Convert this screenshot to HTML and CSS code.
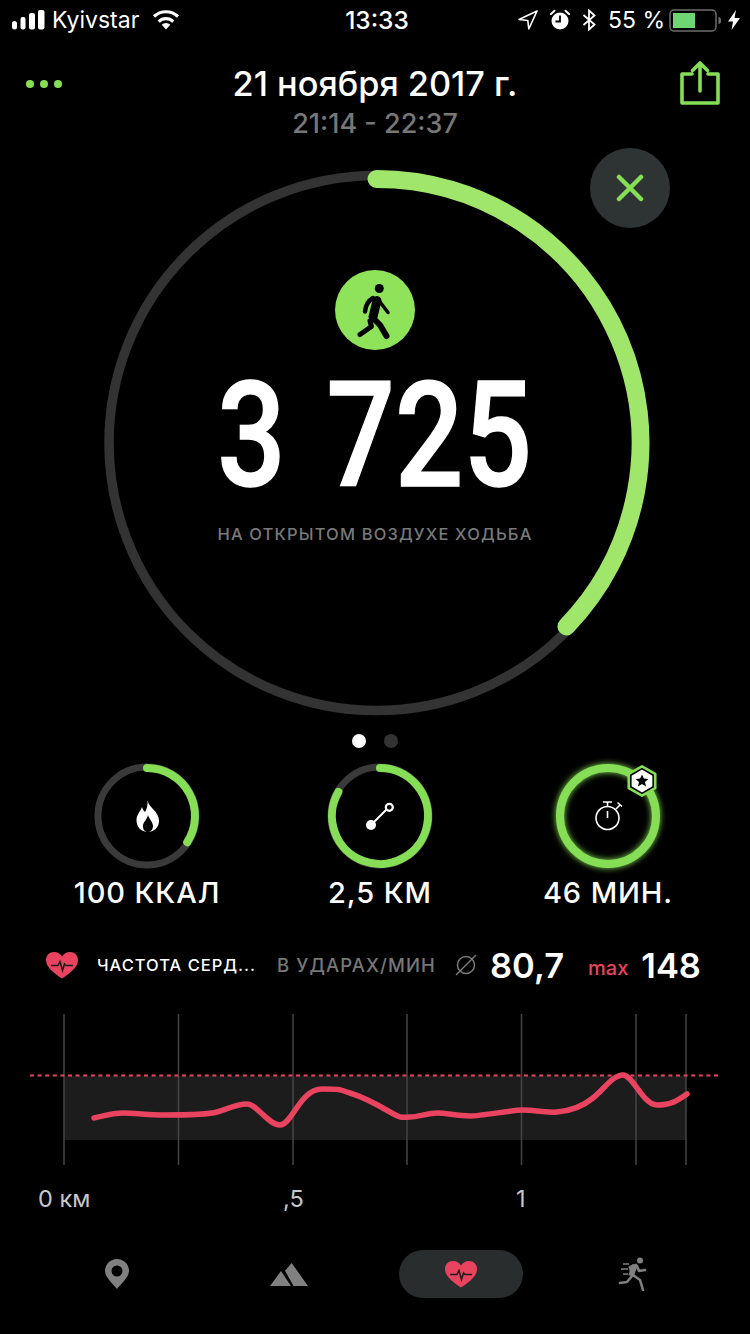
FILE: index.html
```html
<!DOCTYPE html>
<html lang="ru">
<head>
<meta charset="utf-8">
<title>Workout</title>
<link rel="stylesheet" href="styles.css">
</head>
<body>
<div class="phone">
  <div class="status">
    <div class="status-left">
      <svg class="ic-signal" viewBox="12 8 34 24"><rect x="12" y="21" width="5" height="8.5" rx="2.5"/><rect x="20.500" y="17" width="5" height="12.500" rx="2"/><rect x="29" y="13" width="6" height="16.500" rx="2"/><rect x="38" y="10" width="6.500" height="19.500" rx="2"/></svg>
      <span class="carrier">Kyivstar</span>
      <svg class="ic-wifi" viewBox="0 0 28 20"><path d="M14 19.500 9.700 14.800a6.300 6.300 0 0 1 8.600 0Z" fill="#fff"/><path d="M6.700 11.600a10.600 10.600 0 0 1 14.600 0M2 6.500a17.500 17.500 0 0 1 24 0" fill="none" stroke="#fff" stroke-width="3.200"/></svg>
    </div>
    <div class="clock">13:33</div>
    <div class="status-right">
      <svg class="ic-loc" viewBox="0 0 20 20"><path d="M19 1 1 9.500l8.800 1 1 8.500Z" fill="none" stroke="#fff" stroke-width="1.600" stroke-linejoin="round"/></svg>
      <svg class="ic-alarm" viewBox="0 0 20 22"><circle cx="10" cy="12" r="8.500" fill="#fff"/><path d="M10 6.500V12.500H5.500" fill="none" stroke="#000" stroke-width="1.800"/><path d="M1 5 4.500 1.700M19 5 15.500 1.700" stroke="#fff" stroke-width="2" stroke-linecap="round"/></svg>
      <svg class="ic-bt" viewBox="0 0 14 22"><path d="M1.500 6 12.500 15.500 7 20.500V1.500L12.500 6.500 1.500 16" fill="none" stroke="#fff" stroke-width="1.800"/></svg>
      <span class="pct">55 %</span>
      <svg class="ic-batt" viewBox="0 0 54 23"><rect x="1" y="1" width="46" height="21" rx="4" fill="none" stroke="#6e6e6e" stroke-width="1.500"/><rect x="4" y="4" width="22" height="15" fill="#6fd572"/><path d="M49.500 8c2 0 2.500 1.500 2.500 3.500s-.5 3.500-2.500 3.500Z" fill="#6e6e6e"/></svg>
      <svg class="ic-bolt" viewBox="0 0 12 20"><path d="M8 0 0 11.500h5L3.500 20 12 8H6.500Z" fill="#fff"/></svg>
    </div>
  </div>

  <header class="head">
    <div class="dots"><i></i><i></i><i></i></div>
    <div class="titles">
      <div class="date">21 ноября 2017 г.</div>
      <div class="range">21:14 - 22:37</div>
    </div>
    <svg class="ic-share" viewBox="0 0 40 44"><path d="M12 13H2v29h36V13H28M20 30V3M12.500 9.500 20 2l7.500 7.500" fill="none" stroke="#85de55" stroke-width="3.600" stroke-linejoin="round" stroke-linecap="round"/></svg>
  </header>

  <section class="hero">
    <svg class="hero-ring" viewBox="0 160 750 566">
      <circle cx="376.500" cy="443" r="267.500" fill="none" stroke="#333333" stroke-width="9.500"/>
      <path d="M376.500 179A264 264 0 0 1 566.400 626.400" fill="none" stroke="#a0e66a" stroke-width="18" stroke-linecap="round"/>
    </svg>
    <div class="hero-body">
      <svg class="ic-walk" viewBox="335 270 80 80">
        <circle cx="375" cy="310" r="40" fill="#8fe35a"/>
        <circle cx="379.300" cy="288.500" r="4.500" fill="#000"/>
        <path d="M377 300.500 373 317" stroke="#000" stroke-width="9" stroke-linecap="round"/>
        <path d="M373 298Q366 302 365 311.500" fill="none" stroke="#000" stroke-width="4.500" stroke-linecap="round"/>
        <path d="M380 302 388 312.500" stroke="#000" stroke-width="3.500" stroke-linecap="round"/>
        <path d="M372 317 380 325 386.500 336" fill="none" stroke="#000" stroke-width="6" stroke-linecap="round" stroke-linejoin="round"/>
        <path d="M370 321 371.500 326.500 360 334.500" fill="none" stroke="#000" stroke-width="5" stroke-linecap="round" stroke-linejoin="round"/>
      </svg>
      <div class="big">3 725</div>
      <div class="kind">НА ОТКРЫТОМ ВОЗДУХЕ ХОДЬБА</div>
    </div>
    <button class="close" aria-label="Закрыть"><svg viewBox="0 0 28 28"><path d="M3 3 25 25M25 3 3 25" stroke="#85de55" stroke-width="4.500" stroke-linecap="round"/></svg></button>
  </section>

  <div class="pager"><i class="on"></i><i></i></div>

  <section class="metrics">
    <div class="metric">
      <svg class="mring" viewBox="0 0 106 106">
        <circle cx="53" cy="53" r="49" fill="none" stroke="#3a3a3a" stroke-width="7"/>
        <path d="M53 5A48 48 0 0 1 93.200 79.200" fill="none" stroke="#85de55" stroke-width="8" stroke-linecap="round"/>
        <path d="M53.500 37C54.500 45 65 48 65 58 65 65 59 69 54 69 47 69 42.500 64 42.500 57 42.500 52 46 49 48 44 49 47 50 48 51 49 53 46 54 41 53.500 37Z" fill="#fff"/>
        <path d="M54 52C55 56 59 59 59 63 59 67 56 69 54 69 51 69 49 67 49 63 49 59 53 57 54 52Z" fill="#000"/>
      </svg>
      <div class="mlabel">100 ККАЛ</div>
    </div>
    <div class="metric">
      <svg class="mring" viewBox="0 0 106 106">
        <circle cx="53" cy="53" r="49" fill="none" stroke="#3a3a3a" stroke-width="7"/>
        <path d="M53 5A48 48 0 1 1 11.400 29" fill="none" stroke="#85de55" stroke-width="8" stroke-linecap="round"/>
        <circle cx="44" cy="62" r="5" fill="#fff"/>
        <circle cx="62.300" cy="44.300" r="3.500" fill="none" stroke="#fff" stroke-width="2.200"/>
        <path d="M44 62 60 46" stroke="#fff" stroke-width="2"/>
      </svg>
      <div class="mlabel">2,5 КМ</div>
    </div>
    <div class="metric">
      <svg class="mring mring-best" viewBox="0 0 106 106">
        <circle class="glow" cx="53" cy="53" r="48" fill="none" stroke="#85de55" stroke-width="8"/>
        <circle cx="52.500" cy="55" r="11.500" fill="none" stroke="#fff" stroke-width="1.600"/>
        <path d="M52.500 55V48M52.500 43.500V39.500M48 39H57M61 46 65 42M62.500 39.500 67 43.500" fill="none" stroke="#fff" stroke-width="1.600"/>
      </svg>
      <svg class="badge" viewBox="0 0 34 36"><path d="M17 1.500 32 10V26L17 34.500 2 26V10Z" fill="#000" stroke="#85de55" stroke-width="3" stroke-linejoin="round"/><path d="M17 6 28 12.300V23.700L17 30 6 23.700V12.300Z" fill="#fff" stroke="#fff" stroke-width="1.500" stroke-linejoin="round"/><path d="M17 10.500 19.100 15.200 24.200 15.700 20.400 19.100 21.500 24.200 17 21.500 12.500 24.200 13.600 19.100 9.800 15.700 14.900 15.200Z" fill="#000"/></svg>
      <div class="mlabel">46 МИН.</div>
    </div>
  </section>

  <section class="hr-row">
    <svg class="ic-heart" viewBox="0 0 32 27"><path d="M16 26.500C10 22.500 0 16 0 8 0 3.500 3.500 0 8 0 11.500 0 14.500 2 16 4.500 17.500 2 20.500 0 24 0 28.500 0 32 3.500 32 8 32 16 22 22.500 16 26.500Z" fill="#e9435f"/><path d="M5 13.500H12L14 9.500 16.500 18.500 18.500 12 20 13.500H27" fill="none" stroke="#1c1c1c" stroke-width="1.500"/></svg>
    <span class="hr-title">ЧАСТОТА СЕРД...</span>
    <span class="hr-unit">В УДАРАХ/МИН</span>
    <svg class="ic-avg" viewBox="0 0 22 22"><circle cx="11" cy="11" r="8.500" fill="none" stroke="#7a7a7a" stroke-width="1.500"/><path d="M1 21 21 1" stroke="#7a7a7a" stroke-width="1.500"/></svg>
    <span class="hr-val hr-avg">80,7</span>
    <span class="hr-max">max</span>
    <span class="hr-val">148</span>
  </section>

  <svg class="chart" viewBox="0 1010 750 160">
    <rect x="64" y="1076" width="622" height="64" fill="#1c1c1c"/>
    <path d="M64 1014V1165M178.500 1014V1165M293 1014V1165M407 1014V1165M521.500 1014V1165M636 1014V1165M686 1014V1165" stroke="#444" stroke-width="1.500"/>
    <path d="M30 1075.500H720" stroke="#e9435f" stroke-width="2" stroke-dasharray="4 3.600"/>
    <path d="M94 1118C104 1116 112 1113 123 1113S150 1115 163 1115 207 1115 217 1112 237 1104 247 1104 268 1125 280 1125 300 1089 322 1089 340 1090 350 1093 378 1105 390 1112 402 1117 410 1117 428 1113 437 1113 458 1116 470 1116 512 1110 523 1110 545 1113 557 1112 582 1107 593 1098 613 1075 623 1075 643 1105 657 1105 677 1101 687 1094" fill="none" stroke="#e9435f" stroke-width="5.500" stroke-linecap="round"/>
  </svg>

  <div class="axis">
    <span class="tick tick-0">0 км</span>
    <span class="tick tick-1">,5</span>
    <span class="tick tick-2">1</span>
  </div>

  <nav class="tabs">
    <div class="tab"><svg class="ic-pin" viewBox="0 0 24 30"><path fill-rule="evenodd" d="M12 30C8 25 0 18 0 12a12 12 0 0 1 24 0C24 18 16 25 12 30ZM12 6.500a5.500 5.500 0 1 0 0 11 5.500 5.500 0 0 0 0-11Z" fill="#808080"/></svg></div>
    <div class="tab"><svg class="ic-mount" viewBox="0 0 38 23"><path d="M0 23 11 8 21 23ZM15 7.700 21.700 0 38 23H23.500Z" fill="#808080"/></svg></div>
    <div class="tab tab-on"><svg class="ic-heart ic-heart-tab" viewBox="0 0 32 27"><path d="M16 26.500C10 22.500 0 16 0 8 0 3.500 3.500 0 8 0 11.500 0 14.500 2 16 4.500 17.500 2 20.500 0 24 0 28.500 0 32 3.500 32 8 32 16 22 22.500 16 26.500Z" fill="#e9435f"/><path d="M5 13.500H12L14 9.500 16.500 18.500 18.500 12 20 13.500H27" fill="none" stroke="#1c1c1c" stroke-width="1.500"/></svg></div>
    <div class="tab"><svg class="ic-run" viewBox="0 0 30 34"><circle cx="22" cy="3.500" r="3" fill="#808080"/><path d="M18 8 12 10 14 19 9 25 2 26M15 18 22 23 25 33M19 9 21 14 27 13" fill="none" stroke="#808080" stroke-width="2.600" stroke-linecap="round" stroke-linejoin="round"/><path d="M17 8 13 19" stroke="#808080" stroke-width="5.500"/><path d="M5 7H11M3 12H10M5 17H10" stroke="#808080" stroke-width="1.500"/></svg></div>
  </nav>
</div>
</body>
</html>
```
FILE: styles.css
```css
* { box-sizing: border-box; }
html, body { margin: 0; padding: 0; background: #000; }
body { font-family: Inter, "Noto Sans", sans-serif; color: #fff; }
svg { display: block; flex: none; }
.phone { width: 750px; height: 1334px; overflow: hidden; background: #000; }

.status { height: 40px; padding: 0 10px 0 12px; display: grid; grid-template-columns: 1fr auto 1fr; align-items: center; font-size: 23px; line-height: 40px; }
.status-left { display: flex; align-items: center; }
.ic-signal { width: 34px; height: 24px; fill: #fff; }
.carrier { margin-left: 6px; font-weight: 400; }
.ic-wifi { width: 28px; height: 20px; margin-left: 13px; }
.clock { font-size: 24.500px; font-weight: 500; padding-left: 2px; }
.status-right { display: flex; align-items: center; justify-content: flex-end; }
.ic-loc { width: 20px; height: 20px; }
.ic-alarm { width: 20px; height: 22px; margin-left: 12px; }
.ic-bt { width: 14px; height: 22px; margin-left: 12px; }
.pct { margin-left: 12px; white-space: nowrap; }
.ic-batt { width: 54px; height: 23px; margin-left: 4px; }
.ic-bolt { width: 12px; height: 20px; margin-left: 5px; }

.head { position: relative; height: 104px; padding-top: 24px; text-align: center; }
.date { font-size: 34.300px; line-height: 40px; font-weight: 500; }
.range { font-size: 27px; line-height: 36px; font-weight: 500; color: #777; margin-top: 2px; }
.dots { position: absolute; left: 26px; top: 40px; display: flex; gap: 6px; }
.dots i { width: 8px; height: 8px; border-radius: 50%; background: #85de55; }
.ic-share { position: absolute; left: 680px; top: 21px; width: 40px; height: 44px; }

.hero { position: relative; height: 566px; margin-top: 16px; display: grid; justify-items: center; }
.hero-ring { grid-area: 1 / 1; width: 750px; height: 566px; }
.hero-body { grid-area: 1 / 1; width: 750px; display: flex; flex-direction: column; align-items: center; padding-top: 110px; }
.ic-walk { width: 80px; height: 80px; }
.big { font-family: Roboto, sans-serif; font-size: 146px; line-height: 150px; font-weight: 500; word-spacing: 13px; margin-top: 12px; transform: scaleX(.825); -webkit-text-stroke: 1.500px #fff; }
.kind { font-size: 16.500px; line-height: 20px; font-weight: 500; letter-spacing: 1.150px; color: #7a7a7a; margin-top: 12px; }
.close { position: absolute; left: 590px; top: -12px; width: 80px; height: 80px; border: 0; padding: 0; border-radius: 50%; background: #2e3333; display: flex; align-items: center; justify-content: center; }
.close svg { width: 28px; height: 28px; }

.pager { display: flex; justify-content: center; gap: 18px; height: 14px; margin-top: 8px; }
.pager i { width: 14px; height: 14px; border-radius: 50%; background: #333; }
.pager i.on { background: #fff; }

.metrics { display: grid; grid-template-columns: 234px 232px 224px; padding-left: 30px; margin-top: 15px; }
.metric { position: relative; display: flex; flex-direction: column; align-items: center; }
.mring { width: 106px; height: 106px; overflow: visible; }
.glow { filter: drop-shadow(0 0 3px #85de55); }
.badge { position: absolute; left: 131px; top: 2px; width: 30px; height: 32px; }
.mlabel { font-size: 29px; line-height: 34px; font-weight: 500; letter-spacing: .9px; margin-top: 7px; white-space: nowrap; }

.hr-row { display: flex; align-items: center; height: 40px; padding-left: 46px; margin-top: 35px; white-space: nowrap; }
.hr-row .ic-heart { width: 32px; height: 27px; }
.hr-title { font-size: 16.500px; font-weight: 500; letter-spacing: 1px; margin-left: 19px; width: 180px; }
.hr-unit { font-size: 18.500px; font-weight: 500; letter-spacing: 1.100px; color: #777; width: 178px; }
.ic-avg { width: 22px; height: 22px; }
.hr-val { font-size: 34.500px; font-weight: 600; }
.hr-avg { margin-left: 13px; }
.hr-max { font-size: 20px; font-weight: 500; color: #e9435f; margin-left: 24px; margin-right: 13px; padding-top: 6px; }

.chart { width: 750px; height: 160px; margin-top: 25px; }
.axis { position: relative; height: 30px; margin-top: 14px; font-size: 23.500px; line-height: 30px; color: #c8c8c8; }
.tick { position: absolute; top: 0; }
.tick-0 { left: 38px; }
.tick-1 { left: 283px; }
.tick-2 { left: 516px; }

.tabs { display: grid; grid-template-columns: repeat(4, 172px); padding-left: 31px; margin-top: 36px; }
.tab { height: 48px; display: flex; align-items: center; justify-content: center; }
.tab-on { width: 124px; justify-self: center; border-radius: 24px; background: #2a2d2d; }
.ic-pin { width: 24px; height: 30px; }
.ic-mount { width: 38px; height: 23px; }
.ic-heart-tab { width: 32px; height: 27px; }
.ic-run { width: 30px; height: 34px; }
```
